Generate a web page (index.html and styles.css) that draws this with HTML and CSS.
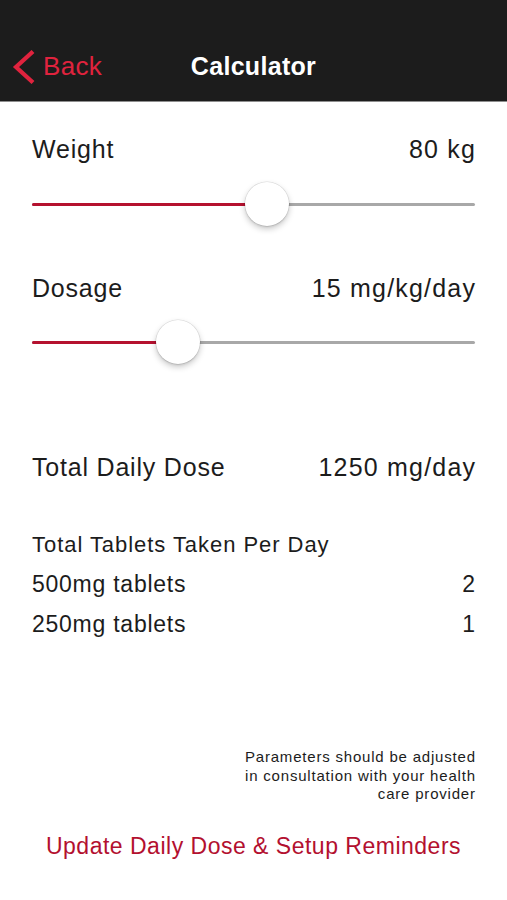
FILE: index.html
```html
<!DOCTYPE html>
<html lang="en">
<head>
<meta charset="utf-8">
<title>Calculator</title>
<link rel="stylesheet" href="styles.css">
</head>
<body>
<header class="navbar">
  <div class="nav-row">
    <a class="back" href="#">
      <svg class="chevron" width="24" height="34" viewBox="0 0 24 34" aria-hidden="true">
        <polyline points="21,1.5 4,17 21,32.5" fill="none" stroke="currentColor" stroke-width="4.2" stroke-linejoin="miter"/>
      </svg>
      <span>Back</span>
    </a>
    <h1 class="title">Calculator</h1>
    <div class="spacer"></div>
  </div>
</header>

<main class="content">
  <section class="param param-weight">
    <div class="row big">
      <span>Weight</span>
      <span class="val">80 kg</span>
    </div>
    <div class="slider">
      <div class="track">
        <div class="fill" style="width:53.05%"></div>
      </div>
      <div class="thumb" style="left:53.05%"></div>
    </div>
  </section>

  <section class="param param-dosage">
    <div class="row big">
      <span>Dosage</span>
      <span class="val">15 mg/kg/day</span>
    </div>
    <div class="slider">
      <div class="track">
        <div class="fill" style="width:32.96%"></div>
      </div>
      <div class="thumb" style="left:32.96%"></div>
    </div>
  </section>

  <div class="row big total">
    <span>Total Daily Dose</span>
    <span class="val">1250 mg/day</span>
  </div>

  <section class="tablets">
    <div class="tablets-title">Total Tablets Taken Per Day</div>
    <div class="row tab-row">
      <span>500mg tablets</span>
      <span class="val">2</span>
    </div>
    <div class="row tab-row">
      <span>250mg tablets</span>
      <span class="val">1</span>
    </div>
  </section>

  <p class="disclaimer">Parameters should be adjusted<br>in consultation with your health<br>care provider</p>

  <a class="update" href="#">Update Daily Dose &amp; Setup Reminders</a>
</main>
</body>
</html>
```

FILE: styles.css
```css
* { box-sizing: border-box; }

html, body {
  margin: 0;
  padding: 0;
  background: #ffffff;
}

body {
  font-family: "Liberation Sans", Arial, sans-serif;
  color: #1c1c1c;
  width: 507px;
}

.navbar {
  background: #1c1c1c;
  height: 102px;
  padding-top: 44px;
  border-bottom: 1px solid #8e8e8e;
}

.nav-row {
  height: 44px;
  display: grid;
  grid-template-columns: 1fr auto 1fr;
  align-items: center;
}

.back {
  display: flex;
  align-items: center;
  gap: 7px;
  padding-left: 12px;
  color: #e0233e;
  text-decoration: none;
  font-size: 26px;
  letter-spacing: 0.3px;
  line-height: 34px;
}

.chevron {
  display: block;
  margin-top: 2px;
}

.title {
  margin: 0;
  color: #ffffff;
  font-size: 25px;
  font-weight: bold;
  letter-spacing: 0.3px;
  line-height: 34px;
}

.content {
  padding: 0 32px 0 32px;
  display: flex;
  flex-direction: column;
}

.row {
  display: flex;
  justify-content: space-between;
  align-items: center;
}

.row .val {
  margin-right: -0.8px;
}

.big {
  font-size: 25px;
  letter-spacing: 0.8px;
  line-height: 30px;
}

.big .val {
  letter-spacing: 1.2px;
  margin-right: -1.2px;
}

.param-weight { margin-top: 32px; }
.param-dosage { margin-top: 47px; }

.slider {
  position: relative;
  height: 44px;
  margin-top: 18px;
  display: flex;
  align-items: center;
}

.param-dosage .slider { margin-top: 17px; }

.track {
  width: 100%;
  height: 3px;
  border-radius: 2px;
  background: #a8a8a8;
  overflow: hidden;
}

.fill {
  height: 100%;
  background: #b5112f;
}

.thumb {
  position: absolute;
  top: 0;
  width: 44px;
  height: 44px;
  margin-left: -22px;
  border-radius: 50%;
  background: #ffffff;
  box-shadow: 0 0 0 0.5px rgba(0, 0, 0, 0.12), 0 3px 6px rgba(0, 0, 0, 0.22), 0 1px 2px rgba(0, 0, 0, 0.1);
}

.total { margin-top: 88px; }

.tablets {
  margin-top: 49px;
  display: flex;
  flex-direction: column;
}

.tablets-title {
  font-size: 22px;
  letter-spacing: 0.95px;
  line-height: 28px;
}

.tab-row {
  font-size: 23px;
  letter-spacing: 0.75px;
  line-height: 40px;
}

.tablets-title + .tab-row { margin-top: 5px; }

.disclaimer {
  margin: 104px -0.8px 0 0;
  text-align: right;
  font-size: 15px;
  letter-spacing: 0.8px;
  line-height: 18.7px;
  color: #1c1c1c;
}

.update {
  margin-top: 27px;
  align-self: center;
  color: #b3102f;
  text-decoration: none;
  font-size: 23px;
  letter-spacing: 0.5px;
  line-height: 30px;
}
```
